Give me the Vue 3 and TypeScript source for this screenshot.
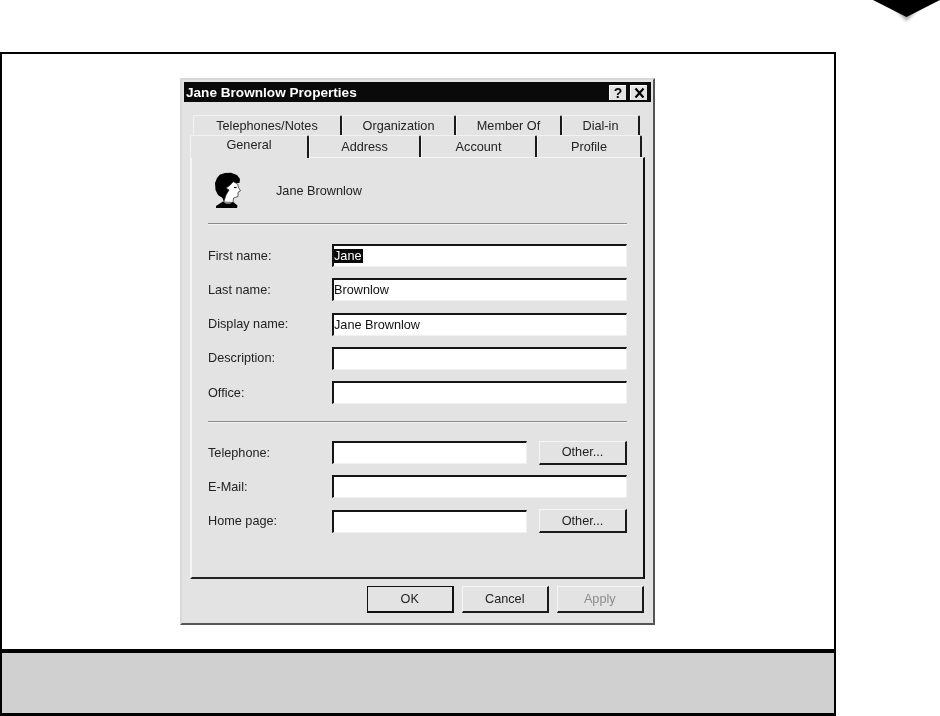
<script setup lang="ts">
interface Row { label: string; value?: string; selected?: boolean; other?: boolean }
const topTabs = [
  { label: 'Telephones/Notes', width: 149 },
  { label: 'Organization', width: 114 },
  { label: 'Member Of', width: 106 },
  { label: 'Dial-in', width: 78 },
]
const bottomTabs = [
  { label: 'General', width: 119, active: true },
  { label: 'Address', width: 112 },
  { label: 'Account', width: 116 },
  { label: 'Profile', width: 105 },
]
const nameRows: Row[] = [
  { label: 'First name:', value: 'Jane', selected: true },
  { label: 'Last name:', value: 'Brownlow' },
  { label: 'Display name:', value: 'Jane Brownlow' },
  { label: 'Description:' },
  { label: 'Office:' },
]
const contactRows: Row[] = [
  { label: 'Telephone:', other: true },
  { label: 'E-Mail:' },
  { label: 'Home page:', other: true },
]
</script>

<template>
  <div class="page">
    <header class="head">
      <svg class="arrow" width="67" height="26" viewBox="0 0 67 26">
        <defs>
          <filter id="soft" x="-20%" y="-50%" width="140%" height="200%">
            <feGaussianBlur stdDeviation="1.500" />
          </filter>
        </defs>
        <polygon points="16,4 51,4 33.500,21" fill="#aaa" filter="url(#soft)" />
        <polygon points="0,0 67,0 33.500,17" fill="#000" />
      </svg>
    </header>
    <main class="frame">
      <section class="stage">
        <div class="dialog">
          <div class="title">
            <span class="title-text">Jane Brownlow Properties</span>
            <span class="caps">
              <span class="cap">?</span>
              <span class="cap">
                <svg width="11" height="10" viewBox="0 0 11 10">
                  <path d="M1.500 0.500 L9.500 9.500 M9.500 0.500 L1.500 9.500" stroke="#000" stroke-width="2.200" />
                </svg>
              </span>
            </span>
          </div>
          <div class="tabs top">
            <div v-for="t in topTabs" :key="t.label" class="tab" :style="{ width: t.width + 'px' }">{{ t.label }}</div>
          </div>
          <div class="tabs bottom">
            <div
              v-for="t in bottomTabs"
              :key="t.label"
              class="tab"
              :class="{ active: t.active }"
              :style="{ width: t.width + 'px' }"
            >{{ t.label }}</div>
          </div>
          <div class="panel">
            <div class="identity">
              <svg class="person" width="27" height="36" viewBox="0 0 27 36">
                <path d="M5 2.500 L10 1 L16 0.800 L22 3 L25 7 L24.500 11 L20 11 L18 20 L14 30 L9 30 L7.500 26 L3 23 L0.500 18 L0 11 L2 6 Z" fill="#000" />
                <path d="M18.300 9.700 L22.700 12 L23.300 15 L25.500 19 L23 20.300 L23 24.500 L18.500 26 L18 30.500 L8.800 30 L11 23 L14 18 L11 16 L14.500 13.700 Z" fill="#fff" stroke="#222" stroke-width="0.700" stroke-linejoin="round" />
                <path d="M1 34 L8 29.500 L11 31.500 L15 31.500 L18.300 30 L22.500 33.500 L22 36 L1 36 Z" fill="#000" />
                <path d="M19 15.500 L21.500 15.500" stroke="#000" stroke-width="1.200" />
              </svg>
              <span class="who">Jane Brownlow</span>
            </div>
            <hr class="sep" />
            <div class="fields">
              <div v-for="r in nameRows" :key="r.label" class="row">
                <span class="lbl">{{ r.label }}</span>
                <div class="input">
                  <span :class="{ sel: r.selected }">{{ r.value }}</span>
                </div>
              </div>
            </div>
            <hr class="sep second" />
            <div class="fields">
              <div v-for="r in contactRows" :key="r.label" class="row">
                <span class="lbl">{{ r.label }}</span>
                <div class="input"></div>
                <div v-if="r.other" class="btn other">Other...</div>
              </div>
            </div>
          </div>
          <div class="actions">
            <div class="btn act ok">OK</div>
            <div class="btn act">Cancel</div>
            <div class="btn act off">Apply</div>
          </div>
        </div>
      </section>
      <div class="strip"></div>
    </main>
  </div>
</template>

<style>
html, body { margin: 0; background: #fff; }
</style>

<style scoped>
.page {
  width: 940px;
  height: 716px;
  overflow: hidden;
  background: #fff;
  font-family: "Liberation Sans", Arial, sans-serif;
}
.head {
  height: 52px;
  display: flex;
  justify-content: flex-end;
  align-items: flex-start;
}
.arrow { display: block; }
.frame {
  box-sizing: border-box;
  width: 836px;
  height: 664px;
  border: 2px solid #000;
  border-bottom-width: 3px;
  display: flex;
  flex-direction: column;
}
.stage {
  height: 595px;
  padding: 24px 0 0 178px;
  box-sizing: border-box;
}
.strip {
  flex: 1;
  background: #d0d0d0;
  border-top: 4px solid #000;
}
.dialog {
  box-sizing: border-box;
  width: 475px;
  height: 547px;
  background: #e3e3e3;
  border-top: 2px solid #d8d8d8;
  border-left: 2px solid #d8d8d8;
  border-right: 2px solid #555;
  border-bottom: 2px solid #555;
  padding: 2px 2px 0 2px;
  display: flex;
  flex-direction: column;
  filter: blur(0.35px);
  color: #222;
  font-size: 12.700px;
}
.title {
  height: 20px;
  background: #0a0a0a;
  color: #fff;
  font-weight: 700;
  font-size: 13.600px;
  display: flex;
  align-items: center;
  justify-content: space-between;
  padding: 0 2px;
}
.caps { display: flex; gap: 4px; margin-right: 2px; }
.cap {
  box-sizing: border-box;
  width: 17px;
  height: 15px;
  background: #e3e3e3;
  border-top: 1px solid #fff;
  border-left: 1px solid #fff;
  color: #000;
  font-size: 14px;
  font-weight: 700;
  display: flex;
  align-items: center;
  justify-content: center;
}
.tabs { display: flex; }
.tabs.top { margin: 13px 0 0 9px; height: 20px; }
.tabs.bottom { margin: 0 0 0 6px; height: 22px; position: relative; }
.tab {
  box-sizing: border-box;
  display: flex;
  align-items: center;
  justify-content: center;
  background: #e3e3e3;
  border-top: 1px solid #f2f2f2;
  border-left: 1px solid #f2f2f2;
  border-right: 2px solid #1a1a1a;
  border-top-left-radius: 2px;
  border-top-right-radius: 2px;
  padding-top: 1px;
}
.tab.active { padding-bottom: 5px; height: 23px; position: relative; z-index: 1; }
.panel {
  box-sizing: border-box;
  margin-left: 6px;
  width: 455px;
  height: 422px;
  border-top: 1px solid #f5f5f5;
  border-left: 2px solid #f5f5f5;
  border-right: 2px solid #111;
  border-bottom: 2px solid #222;
  padding: 14px 16px 0 16px;
  background: #e3e3e3;
}
.identity {
  display: flex;
  align-items: center;
  height: 36px;
  padding-left: 7px;
}
.who { margin-left: 34px; padding-top: 1px; }
.person { display: block; }
.sep {
  margin: 15px 0 0;
  width: 419px;
  height: 0;
  border: 0;
  border-top: 1px solid #8a8a8a;
  border-bottom: 1px solid #f4f4f4;
}
.sep.second { margin-top: 17px; }
.fields {
  margin-top: 19px;
  display: grid;
  grid-auto-rows: 23px;
  row-gap: 11.250px;
  width: 419px;
}
.sep.second + .fields { margin-top: 18px; }
.row { display: flex; align-items: center; }
.lbl { width: 124px; flex: none; }
.input {
  box-sizing: border-box;
  flex: 1;
  height: 23px;
  background: #fff;
  border-top: 2px solid #151515;
  border-left: 2px solid #151515;
  border-right: 1px solid #f0f0f0;
  border-bottom: 1px solid #f0f0f0;
  padding-left: 0;
  display: flex;
  align-items: center;
  color: #111;
}
.sel { background: #0a0a0a; color: #fff; padding-right: 1px; }
.btn {
  box-sizing: border-box;
  background: #e3e3e3;
  border-top: 1px solid #f5f5f5;
  border-left: 1px solid #f5f5f5;
  border-right: 2px solid #1a1a1a;
  border-bottom: 2px solid #1a1a1a;
  display: flex;
  align-items: center;
  justify-content: center;
}
.other { width: 88px; height: 24px; margin-left: 12px; flex: none; }
.actions {
  display: flex;
  justify-content: flex-end;
  gap: 7.500px;
  padding: 7px 7px 0 0;
}
.act { width: 87.500px; height: 27px; }
.ok { border: 1px solid #111; border-right-width: 2px; border-bottom-width: 2px; }
.off { color: #8c8c8c; }
</style>
